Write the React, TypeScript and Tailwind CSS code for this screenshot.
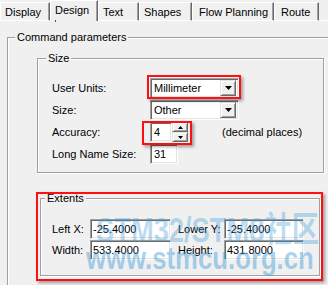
import React from "react";

const sunken =
  "bg-white border border-t-[#a0a0a0] border-l-[#a0a0a0] border-b-white border-r-white shadow-[inset_1px_1px_0_#696969,inset_-1px_-1px_0_#e3e3e3]";
const raised =
  "bg-[#f0f0f0] border border-t-[#e3e3e3] border-l-[#e3e3e3] border-b-[#696969] border-r-[#696969] shadow-[inset_1px_1px_0_#ffffff,inset_-1px_-1px_0_#a0a0a0]";
const etched =
  "border border-[#a0a0a0] shadow-[inset_1px_1px_0_#ffffff,1px_1px_0_#ffffff]";

function Tab({ label, w, pl, selected }: { label: string; w: string; pl: string; selected?: boolean }) {
  if (selected) {
    return (
      <div
        className={`${w} ${pl} h-[21px] pt-[3px] border-t border-l border-t-white border-l-white border-r border-r-[#696969] shadow-[inset_-1px_0_0_#a0a0a0] bg-[#f0f0f0] whitespace-nowrap`}
      >
        {label}
      </div>
    );
  }
  return (
    <div
      className={`${w} ${pl} h-[19px] pt-[3px] border-t border-l border-b border-t-white border-l-white border-b-white border-r border-r-[#696969] shadow-[inset_-1px_0_0_#a0a0a0] bg-[#f0f0f0] whitespace-nowrap`}
    >
      {label}
    </div>
  );
}

function Arrow() {
  return (
    <svg width="7" height="4" viewBox="0 0 7 4">
      <path d="M0 0H7L3.5 4Z" fill="#000" />
    </svg>
  );
}

function Combo({ value }: { value: string }) {
  return (
    <div className={`${sunken} w-[89px] h-[20px] flex items-center pl-[2px] pr-[2px]`}>
      <span className="flex-1 pl-[1px]">{value}</span>
      <div className={`${raised} w-[16px] h-[16px] flex items-center justify-center`}>
        <Arrow />
      </div>
    </div>
  );
}

export default function App() {
  return (
    <div className="relative w-[328px] h-[285px] overflow-hidden bg-[#f0f0f0] text-[11px] leading-[13px] text-black font-['Liberation_Sans',Arial,sans-serif]">
      {/* tabs */}
      <div className="flex items-end h-[21px]">
        <Tab label="Display" w="w-[50px]" pl="pl-[4px]" />
        <Tab label="Design" w="w-[48px]" pl="pl-[4px]" selected />
        <Tab label="Text" w="w-[41px]" pl="pl-[4px]" />
        <Tab label="Shapes" w="w-[53px]" pl="pl-[4px]" />
        <Tab label="Flow Planning" w="w-[82px]" pl="pl-[6px]" />
        <Tab label="Route" w="w-[45px]" pl="pl-[6px]" />
        <div className="flex-1 h-[1px] bg-white" />
      </div>

      {/* Command parameters */}
      <fieldset className={`${etched} ml-[7px] mt-[10px] w-[340px] h-[300px]`}>
        <legend className="ml-[7px] px-[2px] bg-[#f0f0f0]">Command parameters</legend>

        {/* Size */}
        <fieldset className={`${etched} ml-[29px] mt-[8px] w-[287px]`}>
          <legend className="ml-[8px] px-[2px] bg-[#f0f0f0]">Size</legend>
          <div className="mt-[13px] mb-[8px] pl-[14px] grid grid-cols-[98px_auto] gap-y-[2px] items-center">
            <span>User Units:</span>
            <Combo value="Millimeter" />
            <span>Size:</span>
            <Combo value="Other" />
            <span>Accuracy:</span>
            <div className="flex items-center h-[20px]">
              <div className={`${sunken} w-[22px] h-[20px] flex items-center pl-[3px]`}>4</div>
              <div className="flex flex-col w-[16px] h-[20px]">
                <div className={`${raised} h-[10px] flex items-center justify-center`}>
                  <svg width="5" height="3" viewBox="0 0 5 3">
                    <path d="M2.5 0L5 3H0Z" fill="#000" />
                  </svg>
                </div>
                <div className={`${raised} h-[10px] flex items-center justify-center`}>
                  <svg width="5" height="3" viewBox="0 0 5 3">
                    <path d="M0 0H5L2.5 3Z" fill="#000" />
                  </svg>
                </div>
              </div>
              <span className="ml-[34px]">(decimal places)</span>
            </div>
            <span>Long Name Size:</span>
            <div className={`${sunken} w-[28px] h-[20px] flex items-center pl-[3px]`}>31</div>
          </div>
        </fieldset>

        {/* Extents */}
        <fieldset className={`${etched} ml-[32px] mt-[19px] w-[280px]`}>
          <legend className="ml-[4px] px-[2px] bg-[#f0f0f0]">Extents</legend>
          <div className="mt-[14px] mb-[15px] pl-[11px] grid grid-cols-[38px_81px_53px_80px] gap-y-[1px] items-center">
            <span>Left X:</span>
            <div className={`${sunken} h-[20px] flex items-center pl-[2px]`}>-25.4000</div>
            <span className="pl-[7px]">Lower Y:</span>
            <div className={`${sunken} h-[20px] flex items-center pl-[2px]`}>-25.4000</div>
            <span>Width:</span>
            <div className={`${sunken} h-[20px] flex items-center pl-[2px]`}>533.4000</div>
            <span className="pl-[7px]">Height:</span>
            <div className={`${sunken} h-[20px] flex items-center pl-[2px]`}>431.8000</div>
          </div>
        </fieldset>
      </fieldset>

      {/* focus dot */}
      <div className="absolute left-[55px] top-[20px] w-[1px] h-[2px] bg-[#555]" />

      {/* red annotation boxes */}
      <div className="absolute left-[147px] top-[75px] w-[94px] h-[24px] border-2 border-[#ff1010] shadow-[2px_2px_3px_rgba(0,0,0,0.35)]" />
      <div className="absolute left-[142px] top-[121px] w-[50px] h-[24px] border-2 border-[#ff1010] shadow-[2px_2px_3px_rgba(0,0,0,0.35)]" />
      <div className="absolute left-[36px] top-[192px] w-[287px] h-[89px] border-2 border-[#ff1010] shadow-[2px_2px_3px_rgba(0,0,0,0.35)]" />

      {/* watermark */}
      <div className="absolute left-[96px] top-[210px] whitespace-nowrap text-[35px] leading-[40px] font-bold text-[#3d9ad8]/35 origin-left scale-x-[0.78] font-['Liberation_Sans','Noto_Sans_CJK_SC',sans-serif] pointer-events-none">
        STM32/STM8社区
      </div>
      <div className="absolute left-[86px] top-[241px] whitespace-nowrap text-[31px] leading-[36px] font-bold text-[#3d9ad8]/45 origin-left scale-x-[0.83] font-['Liberation_Sans',sans-serif] pointer-events-none">
        www.stmcu.org.cn
      </div>
    </div>
  );
}
